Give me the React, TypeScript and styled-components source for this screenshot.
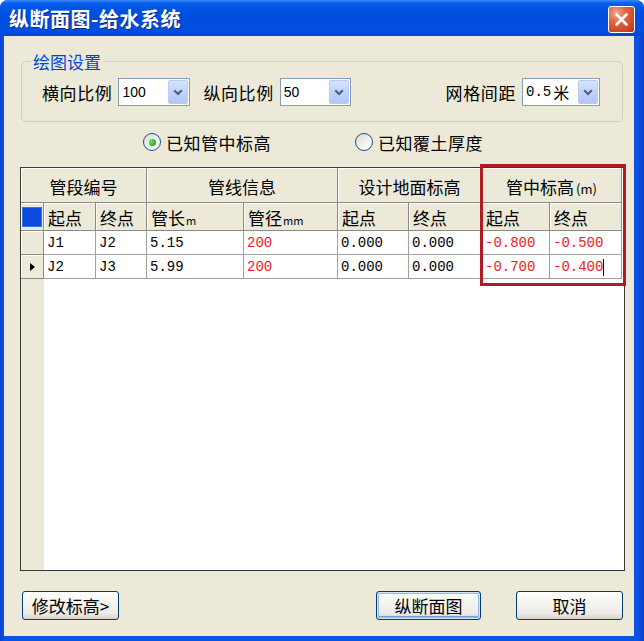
import React from "react";
import styled, { createGlobalStyle } from "styled-components";

const cjk = `"Noto Sans CJK SC", "Noto Sans", sans-serif`;
const mono = `"Liberation Mono", "Noto Sans CJK SC", monospace`;

type PipeRow = {
  from: string;
  to: string;
  len: string;
  dia: string;
  groundFrom: string;
  groundTo: string;
  pipeFrom: string;
  pipeTo: string;
  current?: boolean;
};

const rows: PipeRow[] = [
  { from: "J1", to: "J2", len: "5.15", dia: "200", groundFrom: "0.000", groundTo: "0.000", pipeFrom: "-0.800", pipeTo: "-0.500" },
  { from: "J2", to: "J3", len: "5.99", dia: "200", groundFrom: "0.000", groundTo: "0.000", pipeFrom: "-0.700", pipeTo: "-0.400", current: true },
];

const colWidths = [23, 52, 51, 97, 94, 71, 73, 68, 72];

const GlobalStyle = createGlobalStyle`
  html, body {
    margin: 0;
    padding: 0;
    background: #ffffff;
  }
  body {
    font-family: ${cjk};
    color: #000;
  }
`;

const Chevron = () => (
  <svg width="10" height="7" viewBox="0 0 10 7">
    <path d="M1.2 1.2 L5 5 L8.8 1.2" fill="none" stroke="#4d6185" strokeWidth="2.2" />
  </svg>
);

const Combo: React.FC<{ width: number; children: React.ReactNode }> = ({ width, children }) => (
  <ComboBox $width={width}>
    <ComboText>{children}</ComboText>
    <DropButton>
      <Chevron />
    </DropButton>
  </ComboBox>
);

const Radio: React.FC<{ checked?: boolean; label: string }> = ({ checked, label }) => (
  <RadioOption>
    <RadioCircle>{checked && <RadioDot />}</RadioCircle>
    <RadioLabel>{label}</RadioLabel>
  </RadioOption>
);

const App: React.FC = () => (
  <>
    <GlobalStyle />
    <Window>
      <TitleBar>
        <Title>纵断面图-给水系统</Title>
        <CloseButton>
          <svg width="15" height="15" viewBox="0 0 15 15">
            <path d="M2.5 2.5 L12.5 12.5 M12.5 2.5 L2.5 12.5" stroke="#fff" strokeWidth="2.6" strokeLinecap="round" />
          </svg>
        </CloseButton>
      </TitleBar>

      <Client>
        <Group>
          <Legend>绘图设置</Legend>
          <SettingRow>
            <FieldLabel>横向比例</FieldLabel>
            <Combo width={72}>
              <SansValue>100</SansValue>
            </Combo>
            <FieldLabel $gap={13}>纵向比例</FieldLabel>
            <Combo width={71}>
              <SansValue>50</SansValue>
            </Combo>
            <Spacer />
            <FieldLabel>网格间距</FieldLabel>
            <Combo width={78}>
              <MonoValue>0.5</MonoValue>米
            </Combo>
          </SettingRow>
        </Group>

        <RadioRow>
          <Radio checked label="已知管中标高" />
          <Radio label="已知覆土厚度" />
        </RadioRow>

        <GridFrame>
          <GridBox>
            <Table>
              <colgroup>
                {colWidths.map((w, i) => (
                  <col key={i} style={{ width: w }} />
                ))}
              </colgroup>
              <thead>
                <GroupRow>
                  <GroupHead colSpan={3}>管段编号</GroupHead>
                  <GroupHead colSpan={2}>管线信息</GroupHead>
                  <GroupHead colSpan={2}>设计地面标高</GroupHead>
                  <GroupHead colSpan={2}>
                    管中标高<Paren>(m)</Paren>
                  </GroupHead>
                </GroupRow>
                <ColumnRow>
                  <RowHeader>
                    <CornerMark />
                  </RowHeader>
                  <ColHead>起点</ColHead>
                  <ColHead>终点</ColHead>
                  <ColHead>
                    管长<Unit>m</Unit>
                  </ColHead>
                  <ColHead>
                    管径<Unit>mm</Unit>
                  </ColHead>
                  <ColHead>起点</ColHead>
                  <ColHead>终点</ColHead>
                  <ColHead>起点</ColHead>
                  <ColHead>终点</ColHead>
                </ColumnRow>
              </thead>
              <tbody>
                {rows.map((r) => (
                  <DataRow key={r.from + r.to}>
                    <RowHeader>{r.current && <CurrentMark />}</RowHeader>
                    <Cell>{r.from}</Cell>
                    <Cell>{r.to}</Cell>
                    <Cell>{r.len}</Cell>
                    <Cell $red>{r.dia}</Cell>
                    <Cell>{r.groundFrom}</Cell>
                    <Cell>{r.groundTo}</Cell>
                    <Cell $red>{r.pipeFrom}</Cell>
                    <Cell $red>
                      {r.pipeTo}
                      {r.current && <Caret />}
                    </Cell>
                  </DataRow>
                ))}
              </tbody>
            </Table>
          </GridBox>
          <Highlight />
        </GridFrame>

        <ButtonRow>
          <Button $width={97}>修改标高&gt;</Button>
          <Spacer />
          <Button $width={105} $default>
            纵断面图
          </Button>
          <Button $width={107} $gap={35}>
            取消
          </Button>
        </ButtonRow>
      </Client>
    </Window>
  </>
);

export default App;

const Window = styled.div`
  width: 644px;
  height: 641px;
  display: flex;
  flex-direction: column;
  background: linear-gradient(90deg, #0a3fd0 0px, #0b53e6 4px, #0b53e6 calc(100% - 6px), #0a3dc8 100%);
  border-radius: 8px 8px 0 0;
  overflow: hidden;
`;

const TitleBar = styled.div`
  height: 36px;
  flex: none;
  display: flex;
  align-items: center;
  justify-content: space-between;
  padding: 0 9px 0 9px;
  background: linear-gradient(
    180deg,
    #3b8cf8 0px,
    #0a5fee 3px,
    #0055e5 8px,
    #004bdc 20px,
    #0050e4 30px,
    #0046d0 36px
  );
`;

const Title = styled.span`
  color: #fff;
  font-size: 20px;
  font-weight: bold;
  letter-spacing: 0.5px;
  text-shadow: 1px 1px 0 #0a2a8a;
`;

const CloseButton = styled.div`
  width: 27px;
  height: 27px;
  margin-top: 2px;
  box-sizing: border-box;
  border: 1px solid #fff;
  border-radius: 3px;
  background: radial-gradient(circle at 30% 25%, #f3a991 0%, #e26744 35%, #cd4422 75%, #b53514 100%);
  display: flex;
  align-items: center;
  justify-content: center;
`;

const Client = styled.div`
  flex: 1;
  margin: 0 10px 5px 4px;
  padding-top: 17px;
  background: #ece9d8;
  display: flex;
  flex-direction: column;
`;

const Group = styled.fieldset`
  margin: 0 11px 0 17px;
  padding: 8px 22px 15px 20px;
  border: 1px solid #d0d0bf;
  border-radius: 5px;
  min-width: 0;
`;

const Legend = styled.legend`
  margin-left: -11px;
  padding: 0 2px;
  font-size: 17px;
  line-height: 17px;
  color: #0046d5;
`;

const SettingRow = styled.div`
  display: flex;
  align-items: center;
  height: 28px;
`;

const FieldLabel = styled.span<{ $gap?: number }>`
  font-size: 17px;
  letter-spacing: 0.6px;
  margin-right: 6px;
  margin-left: ${(p) => p.$gap ?? 0}px;
  white-space: nowrap;
`;

const Spacer = styled.div`
  flex: 1;
`;

const ComboBox = styled.div<{ $width: number }>`
  width: ${(p) => p.$width}px;
  height: 28px;
  box-sizing: border-box;
  border: 1px solid #7f9db9;
  background: #fff;
  display: flex;
  align-items: stretch;
`;

const ComboText = styled.div`
  flex: 1;
  padding-left: 3px;
  display: flex;
  align-items: center;
  font-size: 16px;
  white-space: nowrap;
`;

const SansValue = styled.span`
  font-family: "Liberation Sans", Arial, sans-serif;
  font-size: 14px;
`;

const MonoValue = styled.span`
  font-family: ${mono};
  font-size: 14px;
  margin-right: 2px;
`;

const DropButton = styled.div`
  width: 20px;
  margin: 1px;
  border: 1px solid #b9cbf3;
  border-radius: 2px;
  box-sizing: border-box;
  background: linear-gradient(180deg, #d8e4fd 0%, #c3d4fb 45%, #b2c6f6 100%);
  display: flex;
  align-items: center;
  justify-content: center;
`;

const RadioRow = styled.div`
  display: flex;
  align-items: center;
  height: 20px;
  margin-top: 10px;
  padding-left: 139px;
`;

const RadioOption = styled.div`
  display: flex;
  align-items: center;
  width: 212px;
`;

const RadioCircle = styled.div`
  width: 18px;
  height: 18px;
  box-sizing: border-box;
  border-radius: 50%;
  border: 1px solid #1c5180;
  background: linear-gradient(135deg, #dcdcd5 0%, #f4f4f0 60%, #ffffff 100%);
  display: flex;
  align-items: center;
  justify-content: center;
  margin-right: 5px;
`;

const RadioDot = styled.div`
  width: 7px;
  height: 7px;
  border-radius: 50%;
  background: radial-gradient(circle at 35% 35%, #6fe06f 0%, #2fb12f 60%, #1a8f1a 100%);
`;

const RadioLabel = styled.span`
  font-size: 17px;
  letter-spacing: 0.5px;
`;

const GridFrame = styled.div`
  position: relative;
  height: 404px;
  margin: 15px 9px 0 16px;
`;

const GridBox = styled.div`
  height: 100%;
  box-sizing: border-box;
  border: 1px solid #3a3a3a;
  background: linear-gradient(90deg, #ece9d8 0 23px, #ffffff 23px);
  overflow: hidden;
`;

const Table = styled.table`
  border-collapse: separate;
  border-spacing: 0;
  table-layout: fixed;
  width: 601px;
`;

const GroupRow = styled.tr`
  height: 35px;
`;

const ColumnRow = styled.tr`
  height: 25px;
`;

const DataRow = styled.tr`
  height: 24px;
`;

const GroupHead = styled.th`
  padding: 2px 0 0;
  background: #ece9d8;
  font-weight: normal;
  font-size: 17px;
  text-align: center;
  border-right: 1px solid #8a8a8a;
  border-bottom: 1px solid #8a8a8a;
  box-shadow: inset 1px 1px 0 #ffffff;
  white-space: nowrap;
`;

const ColHead = styled.th`
  padding: 2px 0 0 4px;
  background: #ece9d8;
  font-weight: normal;
  font-size: 17px;
  text-align: left;
  border-right: 1px solid #8a8a8a;
  border-bottom: 1px solid #8a8a8a;
  box-shadow: inset 1px 1px 0 #ffffff;
  white-space: nowrap;
  overflow: hidden;
`;

const Unit = styled.span`
  font-size: 11px;
  margin-left: 1px;
`;

const Paren = styled.span`
  font-size: 13px;
  margin-left: 2px;
`;

const RowHeader = styled.td`
  padding: 0;
  background: #ece9d8;
  border-right: 1px solid #8a8a8a;
  border-bottom: 1px solid #8a8a8a;
  box-shadow: inset 1px 1px 0 #ffffff;
  text-align: center;
  vertical-align: middle;
`;

const CornerMark = styled.div`
  width: 20px;
  height: 20px;
  margin: 0 auto;
  background: #0a4ade;
  box-shadow: inset 0 0 0 1px #3a72ea;
`;

const CurrentMark = styled.div`
  width: 0;
  height: 0;
  margin: 0 auto;
  border-left: 5px solid #000;
  border-top: 4px solid transparent;
  border-bottom: 4px solid transparent;
`;

const Cell = styled.td<{ $red?: boolean }>`
  padding: 1px 0 0 3px;
  background: #fff;
  color: ${(p) => (p.$red ? "#ee1b24" : "#000")};
  font-family: ${mono};
  font-size: 14px;
  border-right: 1px solid #a0a0a0;
  border-bottom: 1px solid #a0a0a0;
  white-space: nowrap;
  vertical-align: middle;
`;

const Caret = styled.span`
  display: inline-block;
  width: 1px;
  height: 17px;
  background: #000;
  vertical-align: middle;
`;

const Highlight = styled.div`
  position: absolute;
  left: 460px;
  top: -3px;
  width: 146px;
  height: 122px;
  box-sizing: border-box;
  border: 3px solid #b01c22;
  pointer-events: none;
`;

const ButtonRow = styled.div`
  display: flex;
  align-items: center;
  margin-top: 20px;
  padding: 0 11px 0 18px;
`;

const Button = styled.button<{ $width: number; $default?: boolean; $gap?: number }>`
  width: ${(p) => p.$width}px;
  height: 29px;
  margin-left: ${(p) => p.$gap ?? 0}px;
  padding: 0;
  font-family: ${cjk};
  font-size: 17px;
  color: #000;
  border: 1px solid #003c74;
  border-radius: 3px;
  background: linear-gradient(180deg, #ffffff 0%, #f6f5f0 35%, #ecebe5 80%, #d8d2c6 100%);
  box-shadow: ${(p) =>
    p.$default ? "inset 0 0 0 1px #cee7ff, inset 0 0 0 2px #98b8ea, inset 0 -1px 0 2px #7a9de0" : "none"};
`;
